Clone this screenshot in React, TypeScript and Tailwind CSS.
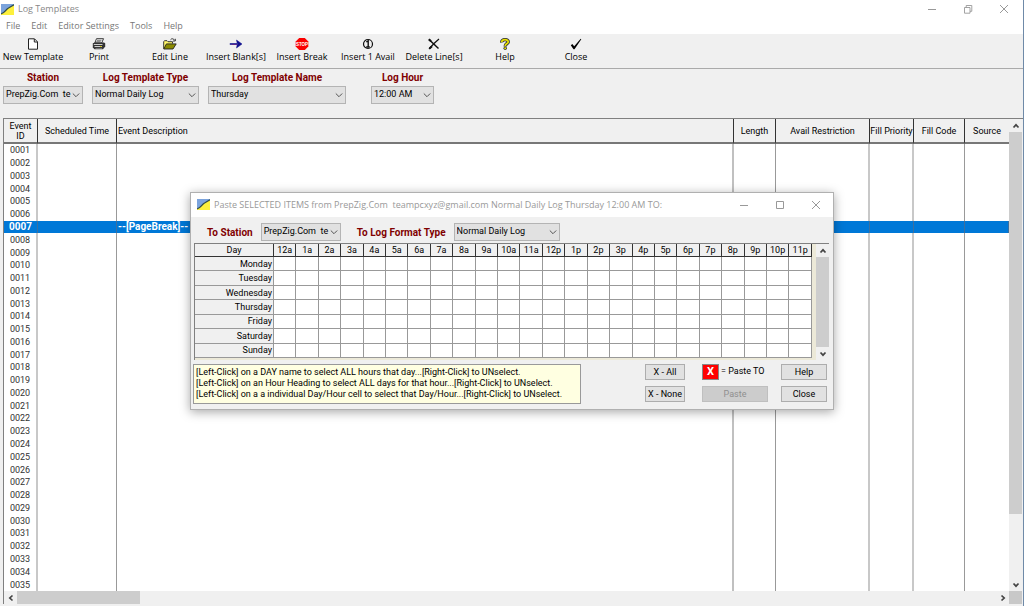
import { useState } from "react";
import type { MouseEvent, ReactNode } from "react";

const columns = [
  { label: "Event ID", width: "w-[34px]", line: "border-r-2 border-r-[#c8c8c8]" },
  { label: "Scheduled Time", width: "w-[79px]", line: "border-r border-r-[#999999]" },
  { label: "Event Description", width: "", line: "border-r-2 border-r-[#c0c0c0]" },
  { label: "Length", width: "w-[42px]", line: "border-r border-r-[#999999]" },
  { label: "Avail Restriction", width: "w-[94px]", line: "border-r-2 border-r-[#c8c8c8]" },
  { label: "Fill Priority", width: "w-[44px]", line: "border-r-2 border-r-[#c8c8c8]" },
  { label: "Fill Code", width: "w-[51px]", line: "border-r border-r-[#999999]" },
  { label: "Source", width: "w-[44px]", line: "" },
];

const events = Array.from({ length: 35 }, (_, i) => ({
  id: String(i + 1).padStart(4, "0"),
  description: i === 6 ? "--[PageBreak]--" : "",
}));

const days = [
  "Monday",
  "Tuesday",
  "Wednesday",
  "Thursday",
  "Friday",
  "Saturday",
  "Sunday",
];

const hours = Array.from(
  { length: 24 },
  (_, i) => `${i % 12 === 0 ? 12 : i % 12}${i < 12 ? "a" : "p"}`
);

const toolGroups = [
  [
    { label: "New Template", icon: <PageIcon /> },
    { label: "Print", icon: <PrinterIcon /> },
  ],
  [
    { label: "Edit Line", icon: <FolderIcon /> },
    { label: "Insert Blank[s]", icon: <ArrowIcon /> },
    { label: "Insert Break", icon: <StopIcon /> },
    { label: "Insert 1 Avail", icon: <AvailIcon /> },
    { label: "Delete Line[s]", icon: <DeleteIcon /> },
  ],
  [{ label: "Help", icon: <HelpIcon /> }],
  [{ label: "Close", icon: <CheckIcon /> }],
];

function LogoIcon() {
  return (
    <svg viewBox="0 0 13 11" className="h-[11px] w-[13px] shrink-0">
      <rect width="13" height="11" fill="#7ba3dc" />
      <path d="M0 11V9.500C4 9 5 5 8 3.500L13 1V11Z" fill="#fdf03c" />
      <path d="M0 9.800C4 9 4.500 5.500 7.500 4L13 .8" fill="none" stroke="#2f4a4c" strokeWidth="1.300" />
    </svg>
  );
}

function PageIcon() {
  return (
    <svg viewBox="0 0 12 12" className="size-3">
      <path d="M1.500 .8H7.500L10.500 3.800V11.200H1.500Z" fill="#fff" stroke="#222" />
      <path d="M7.300 1V4H10.300" fill="none" stroke="#222" />
    </svg>
  );
}

function PrinterIcon() {
  return (
    <svg viewBox="0 0 14 12" className="h-3 w-3.5">
      <path d="M4.500 .7H11.500L9.700 5H2.800Z" fill="#fff" stroke="#222" strokeWidth=".9" />
      <path d="M5 2.300H9.500M4.300 3.700H8.700" stroke="#333" strokeWidth=".7" />
      <path d="M.8 5.300L3 4.500H12L13.200 5.300V8.500L11 11.300H2.500L.8 9.500Z" fill="#333" />
      <path d="M1.800 6.500H10.500M2.500 8.500H10" stroke="#ddd" strokeWidth=".9" />
      <path d="M3.500 10.400H10" stroke="#999" strokeWidth=".7" />
      <rect x="8" y="8" width="1.500" height="1" fill="#d6c900" />
    </svg>
  );
}

function FolderIcon() {
  return (
    <svg viewBox="0 0 14 12" className="h-3 w-3.5">
      <path d="M.7 10.800V3.500L1.700 2.700H4L5 3.700H9.500V5.500" fill="#fff76a" stroke="#222" strokeWidth=".9" />
      <path d="M.8 11L3.400 5.900H13.200L10 11Z" fill="#8b8b00" stroke="#222" strokeWidth=".9" />
      <path d="M7.500 1.800C8.500 .3 10.500 .4 11.700 2.300M12.300 .8V3H10" fill="none" stroke="#222" strokeWidth=".9" />
    </svg>
  );
}

function ArrowIcon() {
  return (
    <svg viewBox="0 0 14 12" className="h-3 w-3.5">
      <path d="M.8 6H8" stroke="#10108f" strokeWidth="1.600" />
      <path d="M7.500 2L13 6L7.500 10L8.300 6Z" fill="#10108f" stroke="#10108f" strokeWidth=".5" />
      <path d="M3 6.500H8" stroke="#6b1c80" strokeWidth=".7" />
    </svg>
  );
}

function StopIcon() {
  return (
    <svg viewBox="0 0 14 12" className="h-3 w-3.5">
      <path d="M4.200 0H9.800L13.300 3.400V8.600L9.800 12H4.200L.7 8.600V3.400Z" fill="#fa0000" />
      <text x="7" y="7.700" textAnchor="middle" fontSize="4.500" fontWeight="700" fill="#fff" fontFamily="Liberation Sans, sans-serif">
        STOP
      </text>
    </svg>
  );
}

function AvailIcon() {
  return (
    <svg viewBox="0 0 12 12" className="size-3">
      <circle cx="6" cy="6" r="4.500" fill="none" stroke="#111" strokeWidth="1.200" />
      <path d="M4.300 4L6.200 2.800V9M4.200 9H7.800" fill="none" stroke="#111" strokeWidth="1.400" />
    </svg>
  );
}

function DeleteIcon() {
  return (
    <svg viewBox="0 0 12 12" className="size-3">
      <path d="M1 1.500L10.500 10.500" stroke="#111" strokeWidth="1.500" />
      <path d="M11 1L6 5.500L1 11" fill="none" stroke="#111" strokeWidth="1.200" />
      <path d="M1.500 10.500L4 8.200M.8 1.200L3 3.300" stroke="#111" strokeWidth="2" />
    </svg>
  );
}

function HelpIcon() {
  return (
    <svg viewBox="0 0 12 12" className="size-3">
      <path d="M2.800 4.500C2.300 .8 9.600 .8 9.200 4C9 5.700 6.200 5.500 6.200 8.400" fill="none" stroke="#333" strokeWidth="3.400" />
      <circle cx="6.200" cy="10.300" r="1.700" fill="#333" />
      <path d="M2.800 4.200C2.300 .8 9.600 .8 9.200 4C9 5.700 6.200 5.500 6.200 8" fill="none" stroke="#e8e000" strokeWidth="1.800" />
      <circle cx="6.200" cy="10.300" r="1" fill="#e8e000" />
    </svg>
  );
}

function CheckIcon() {
  return (
    <svg viewBox="0 0 12 12" className="size-3">
      <path d="M.8 7.200L2.300 6L4.200 8.300L10.700 .8L11.300 1.300L4.500 11.200H3.500Z" fill="#000" />
    </svg>
  );
}

function Chevron({ className }: { className: string }) {
  return (
    <svg viewBox="0 0 8 8" className={className}>
      <path d="M.8 2.500L4 5.700L7.200 2.500" fill="none" stroke="currentColor" />
    </svg>
  );
}

function ScrollArrow({ direction }: { direction: "up" | "down" | "left" | "right" }) {
  const turn = {
    up: "rotate-180",
    down: "",
    left: "rotate-90",
    right: "-rotate-90",
  }[direction];

  return (
    <button
      aria-label={`Scroll ${direction}`}
      className="flex size-[13px] shrink-0 items-center justify-center text-[#444444]"
    >
      <svg viewBox="0 0 8 8" className={`size-2 ${turn}`}>
        <path d="M1.500 2.500L4 5.200L6.500 2.500" fill="none" stroke="currentColor" strokeWidth="1.700" />
      </svg>
    </button>
  );
}

function WindowButtons({ maximized = false }: { maximized?: boolean }) {
  return (
    <div className="ml-auto flex items-center gap-[26px] text-[#999999]">
      <button aria-label="Minimize">
        <svg viewBox="0 0 10 10" className="size-2.5">
          <path d="M1 5.500H9" stroke="currentColor" />
        </svg>
      </button>
      <button aria-label={maximized ? "Restore" : "Maximize"}>
        <svg viewBox="0 0 10 10" className="size-2.5">
          {maximized ? (
            <path d="M1.500 3.500H7V9.200H1.500ZM3.200 3.500V1.500H8.800V7.300H7" fill="none" stroke="currentColor" strokeWidth=".9" />
          ) : (
            <path d="M1.500 1.500H8.500V8.500H1.500Z" fill="none" stroke="currentColor" />
          )}
        </svg>
      </button>
      <button aria-label="Close window">
        <svg viewBox="0 0 10 10" className="size-2.5">
          <path d="M1 1L9 9M9 1L1 9" stroke="currentColor" />
        </svg>
      </button>
    </div>
  );
}

function Dropdown({ id, value, width }: { id: string; value: string; width: string }) {
  return (
    <div className={`relative ${width}`}>
      <select
        id={id}
        defaultValue={value}
        className="block h-[18px] w-full appearance-none border border-[#b4b4b4] bg-[#e1e1e1] pl-[2px] text-[9px] font-normal text-black"
      >
        <option value={value}>{value}</option>
      </select>
      <Chevron className="pointer-events-none absolute top-[5px] right-[3px] size-2 text-[#555555]" />
    </div>
  );
}

function Field({ id, label, value, width }: { id: string; label: string; value: string; width: string }) {
  return (
    <div className="flex flex-col items-center gap-[2px]">
      <label htmlFor={id} className="text-[10px] leading-3 font-bold whitespace-nowrap text-[#800000]">
        {label}
      </label>
      <Dropdown id={id} value={value} width={width} />
    </div>
  );
}

function DialogButton({
  children,
  onClick,
  disabled,
  className,
}: {
  children: ReactNode;
  onClick?: () => void;
  disabled?: boolean;
  className: string;
}) {
  return (
    <button
      onClick={onClick}
      disabled={disabled}
      className={`h-4 border border-[#adadad] bg-[#e1e1e1] leading-3 whitespace-nowrap disabled:border-[#bfbfbf] disabled:bg-[#cccccc] disabled:text-[#8f8f8f] ${className}`}
    >
      {children}
    </button>
  );
}

function PasteDialog({ onClose }: { onClose: () => void }) {
  const [selected, setSelected] = useState<string[]>([]);

  const allKeys = days.flatMap((day) => hours.map((hour) => `${day}-${hour}`));
  const add = (keys: string[]) =>
    setSelected((prev) => [...new Set([...prev, ...keys])]);
  const remove = (keys: string[]) =>
    setSelected((prev) => prev.filter((key) => !keys.includes(key)));

  const clickProps = (keys: string[]) => ({
    onClick: () => add(keys),
    onContextMenu: (e: MouseEvent) => {
      e.preventDefault();
      remove(keys);
    },
  });

  return (
    <div
      role="dialog"
      aria-labelledby="paste-title"
      className="absolute top-[192px] left-[190px] w-[644px] border border-[#b0b0b0] bg-[#f0f0f0] shadow-[0_2px_10px_rgba(0,0,0,0.35)]"
    >
      <div className="flex h-6 items-center gap-1 bg-white pr-3 pb-px pl-1.5">
        <LogoIcon />
        <h2
          id="paste-title"
          className="font-['Open_Sans',sans-serif] text-[9px] whitespace-pre text-[#999999]"
        >
          Paste SELECTED ITEMS from PrepZig.Com{"  "}teampcxyz@gmail.com Normal Daily Log Thursday 12:00 AM TO:
        </h2>
        <WindowButtons />
      </div>

      <div className="flex items-center gap-2 pt-1.5 pl-4 text-[10px] font-bold text-[#800000]">
        <label htmlFor="to-station">To Station</label>
        <Dropdown id="to-station" value={"PrepZig.Com\u00a0 te"} width="w-20" />
        <label htmlFor="to-type" className="pl-2">
          To Log Format Type
        </label>
        <Dropdown id="to-type" value="Normal Daily Log" width="w-[106px]" />
      </div>

      <div className="mr-1 ml-[3px] mt-[2px] flex border-t border-l border-[#808080] bg-[#ece9d8]">
        <div className="flex-1 pb-[2px]">
          <table className="h-[114px] w-full table-fixed border-separate border-spacing-0 bg-white text-[9px]">
            <thead>
              <tr className="h-[13px] bg-[#f0f0f0]">
                <th className="w-[79px] border-r border-b border-[#333333] p-0 leading-3 font-normal">
                  Day
                </th>
                {hours.map((hour) => (
                  <th
                    key={hour}
                    className="border-r border-b border-[#333333] p-0 leading-3 font-normal"
                    {...clickProps(days.map((day) => `${day}-${hour}`))}
                  >
                    {hour}
                  </th>
                ))}
              </tr>
            </thead>
            <tbody>
              {days.map((day) => (
                <tr key={day}>
                  <th
                    className="border-r border-b border-[#999999] bg-[#f0f0f0] py-0 pr-px pl-0 text-right leading-3 font-normal"
                    {...clickProps(hours.map((hour) => `${day}-${hour}`))}
                  >
                    {day}
                  </th>
                  {hours.map((hour) => (
                    <td
                      key={hour}
                      className={`border-r border-b border-[#999999] p-0 text-center leading-3 ${
                        selected.includes(`${day}-${hour}`) ? "bg-red-600 text-white" : ""
                      }`}
                      {...clickProps([`${day}-${hour}`])}
                    >
                      {selected.includes(`${day}-${hour}`) ? "X" : ""}
                    </td>
                  ))}
                </tr>
              ))}
            </tbody>
          </table>
        </div>
        <div className="ml-1 flex w-[13px] flex-col bg-[#f0f0f0]">
          <ScrollArrow direction="up" />
          <div className="flex-1 bg-[#cdcdcd]" />
          <ScrollArrow direction="down" />
        </div>
      </div>

      <div className="flex items-start pt-1 pr-1.5 pb-[5px] pl-[2px] text-[9px]">
        <div className="h-10 w-[388px] border border-[#999999] bg-[#ffffe1] px-[2px] pt-[2px] leading-[11px] whitespace-nowrap">
          <p>[Left-Click] on a DAY name to select ALL hours that day...[Right-Click] to UNselect.</p>
          <p>[Left-Click] on an Hour Heading to select ALL days for that hour...[Right-Click] to UNselect.</p>
          <p>[Left-Click] on a a individual Day/Hour cell to select that Day/Hour...[Right-Click] to UNselect.</p>
        </div>
        <div className="ml-auto flex flex-col gap-1.5">
          <DialogButton className="w-10" onClick={() => add(allKeys)}>
            X - All
          </DialogButton>
          <DialogButton className="w-10" onClick={() => setSelected([])}>
            X - None
          </DialogButton>
        </div>
        <div className="ml-[17px] flex flex-col gap-1.5">
          <div className="flex h-4 items-center gap-[2px]">
            <span className="flex h-4 w-[17px] items-center justify-center border border-[#888888] bg-[#ff0000] text-[11px] font-bold text-white">
              X
            </span>
            <span>= Paste TO</span>
          </div>
          <DialogButton className="w-[66px]" disabled={selected.length === 0}>
            Paste
          </DialogButton>
        </div>
        <div className="ml-[13px] flex flex-col gap-1.5">
          <DialogButton className="w-[46px]">Help</DialogButton>
          <DialogButton className="w-[46px]" onClick={onClose}>
            Close
          </DialogButton>
        </div>
      </div>
    </div>
  );
}

export default function App() {
  const [dialogOpen, setDialogOpen] = useState(true);
  const [activeRow, setActiveRow] = useState("0007");

  return (
    <div className="relative flex h-screen flex-col border-r border-[#6f8aa8] bg-[#f0f0f0] font-[Roboto,sans-serif] text-black">
      {/* Title bar and menu */}
      <header className="bg-white font-['Open_Sans',sans-serif] text-[9px] text-[#777777]">
        <div className="flex h-[18px] items-center gap-1 pr-3.5 pl-px">
          <LogoIcon />
          <h1 className="text-[#888888]">Log Templates</h1>
          <WindowButtons maximized />
        </div>
        <nav className="flex h-4 items-center gap-[11px] pl-1.5">
          {["File", "Edit", "Editor Settings", "Tools", "Help"].map((item) => (
            <button key={item}>{item}</button>
          ))}
        </nav>
      </header>

      {/* Toolbar */}
      <div className="flex h-[35px] gap-[5px] border-b border-[#aaaaaa] font-['Open_Sans',sans-serif]">
        {toolGroups.map((group) => (
          <div key={group[0].label} className="flex">
            {group.map((tool) => (
              <button
                key={tool.label}
                className="flex w-[66px] flex-col items-center pt-1 text-[9px] leading-[14px] whitespace-nowrap"
              >
                {tool.icon}
                {tool.label}
              </button>
            ))}
          </div>
        ))}
      </div>

      {/* Filters */}
      <div className="flex h-[49px] gap-[9px] pt-[3px] pl-[3px]">
        <Field id="station" label="Station" value={"PrepZig.Com\u00a0 te"} width="w-20" />
        <Field id="type" label="Log Template Type" value="Normal Daily Log" width="w-[107px]" />
        <Field id="name" label="Log Template Name" value="Thursday" width="w-[138px]" />
        <div className="pl-4">
          <Field id="hour" label="Log Hour" value="12:00 AM" width="w-[63px]" />
        </div>
      </div>

      {/* Event list */}
      <div className="ml-[3px] flex min-h-0 flex-1 border-t border-l border-[#808080] bg-white">
        <div className="h-full flex-1">
          <table className="h-full w-full table-fixed border-separate border-spacing-0 text-[9px]">
            <thead>
              <tr className="h-[25px] bg-[#f0f0f0]">
                {columns.map((col) => (
                  <th
                    key={col.label}
                    className={`border-b-2 border-b-[#777777] py-0 leading-[10px] font-normal ${col.width} ${
                      col.label === "Source" ? "" : "border-r border-r-[#333333]"
                    } ${col.label === "Event Description" ? "px-px text-left" : "text-center"} ${
                      col.label === "Event ID" ? "px-1" : "px-0 whitespace-nowrap"
                    }`}
                  >
                    {col.label}
                  </th>
                ))}
              </tr>
            </thead>
            <tbody>
              {events.map((event) => {
                const active = event.id === activeRow;
                return (
                  <tr
                    key={event.id}
                    onClick={() => setActiveRow(event.id)}
                    className={active ? "bg-[#0078d7] text-[10px] font-bold text-white" : "text-[#333333]"}
                  >
                    {columns.map((col) => (
                      <td
                        key={col.label}
                        className={`px-px py-0 leading-3 whitespace-nowrap ${
                          col.label === "Event ID" ? "text-center" : ""
                        } ${active ? "border-r border-r-[#3c6f9e]" : col.line}`}
                      >
                        {col.label === "Event ID" && event.id}
                        {col.label === "Event Description" && event.description}
                      </td>
                    ))}
                  </tr>
                );
              })}
            </tbody>
          </table>
        </div>
        <div className="flex w-3.5 flex-col border-r border-[#f0f0f0] bg-[#f0f0f0]">
          <ScrollArrow direction="up" />
          <div className="flex-6 bg-[#cdcdcd]" />
          <div className="flex-1" />
          <ScrollArrow direction="down" />
        </div>
      </div>
      <div className="mb-[2px] ml-[3px] flex h-[13px] border-l border-[#808080] pr-px">
        <ScrollArrow direction="left" />
        <div className="w-[123px] bg-[#cdcdcd]" />
        <div className="flex-1" />
        <ScrollArrow direction="right" />
        <div className="w-[13px] bg-[#c8c8c8]" />
      </div>

      {dialogOpen && <PasteDialog onClose={() => setDialogOpen(false)} />}
    </div>
  );
}
